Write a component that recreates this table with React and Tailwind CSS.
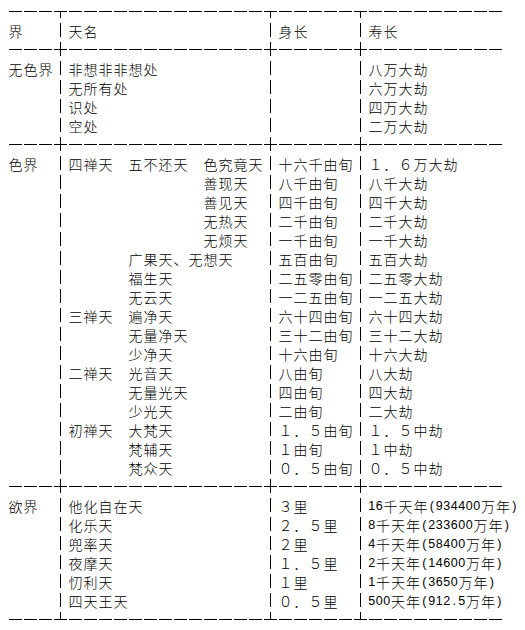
import React from 'react';

const FW = '　';
const pad = (s, n) => s + FW.repeat(n - [...s].length);
const row = (a, b, c, d) => pad(a, 3) + '│' + pad(b, 13) + '│' + pad(c, 5) + '│' + d;
const rule = (j) => '───' + j + '─'.repeat(13) + j + '─'.repeat(5) + j + '─'.repeat(9);
const sp = (n) => FW.repeat(n);

const LINES = [
  rule('┬'),
  row('界', '天名', '身长', '寿长'),
  rule('┼'),
  row('无色界', '非想非非想处', '', '八万大劫'),
  row('', '无所有处', '', '六万大劫'),
  row('', '识处', '', '四万大劫'),
  row('', '空处', '', '二万大劫'),
  rule('┼'),
  row('色界', '四禅天　五不还天　色究竟天', '十六千由旬', '１．６万大劫'),
  row('', sp(9) + '善现天', '八千由旬', '八千大劫'),
  row('', sp(9) + '善见天', '四千由旬', '四千大劫'),
  row('', sp(9) + '无热天', '二千由旬', '二千大劫'),
  row('', sp(9) + '无烦天', '一千由旬', '一千大劫'),
  row('', sp(4) + '广果天、无想天', '五百由旬', '五百大劫'),
  row('', sp(4) + '福生天', '二五零由旬', '二五零大劫'),
  row('', sp(4) + '无云天', '一二五由旬', '一二五大劫'),
  row('', '三禅天　遍净天', '六十四由旬', '六十四大劫'),
  row('', sp(4) + '无量净天', '三十二由旬', '三十二大劫'),
  row('', sp(4) + '少净天', '十六由旬', '十六大劫'),
  row('', '二禅天　光音天', '八由旬', '八大劫'),
  row('', sp(4) + '无量光天', '四由旬', '四大劫'),
  row('', sp(4) + '少光天', '二由旬', '二大劫'),
  row('', '初禅天　大梵天', '１．５由旬', '１．５中劫'),
  row('', sp(4) + '梵辅天', '１由旬', '１中劫'),
  row('', sp(4) + '梵众天', '０．５由旬', '０．５中劫'),
  rule('┼'),
  row('欲界', '他化自在天', '３里', '16千天年(934400万年)'),
  row('', '化乐天', '２．５里', '8千天年(233600万年)'),
  row('', '兜率天', '２里', '4千天年(58400万年)'),
  row('', '夜摩天', '１．５里', '2千天年(14600万年)'),
  row('', '忉利天', '１里', '1千天年(3650万年)'),
  row('', '四天王天', '０．５里', '500天年(912.5万年)'),
  rule('┴'),
];

// box-drawing glyphs: [horizontal, vertical top, vertical bottom]
const BOX = {
  '─': [true, null, null],
  '│': [false, 2, 16],
  '┼': [true, 2, 16],
  '┬': [true, 9.5, 16],
  '┴': [true, 2, 9.5],
};

function Box({ ch }) {
  const [h, y1, y2] = BOX[ch];
  return (
    <svg width="15" height="19" viewBox="0 0 15 19" className="shrink-0" shapeRendering="crispEdges">
      {h && <line x1="1" y1="9.5" x2="14" y2="9.5" stroke="#000" strokeWidth="1" />}
      {y1 !== null && <line x1="7.5" y1={y1} x2="7.5" y2={y2} stroke="#000" strokeWidth="1" />}
    </svg>
  );
}

function Glyph({ ch }) {
  if (BOX[ch]) return <Box ch={ch} />;
  const half = ch.charCodeAt(0) < 128;
  return half ? (
    <span className="w-[7.5px] shrink-0 text-center text-[12.5px] leading-[20px] font-['Liberation_Sans','Noto_Sans_CJK_SC',sans-serif]">
      {ch}
    </span>
  ) : (
    <span className="w-[15px] shrink-0 text-center text-[14px] leading-[20px] font-light font-['Noto_Sans_CJK_SC',sans-serif]">
      {ch}
    </span>
  );
}

export default function App() {
  return (
    <div className="w-[525px] h-[630px] bg-white text-black pl-[8px] pt-[2px] overflow-hidden">
      {LINES.map((line, i) => (
        <div key={i} className="flex h-[19px] whitespace-pre">
          {[...line].map((ch, j) => (
            <Glyph key={j} ch={ch} />
          ))}
        </div>
      ))}
    </div>
  );
}
